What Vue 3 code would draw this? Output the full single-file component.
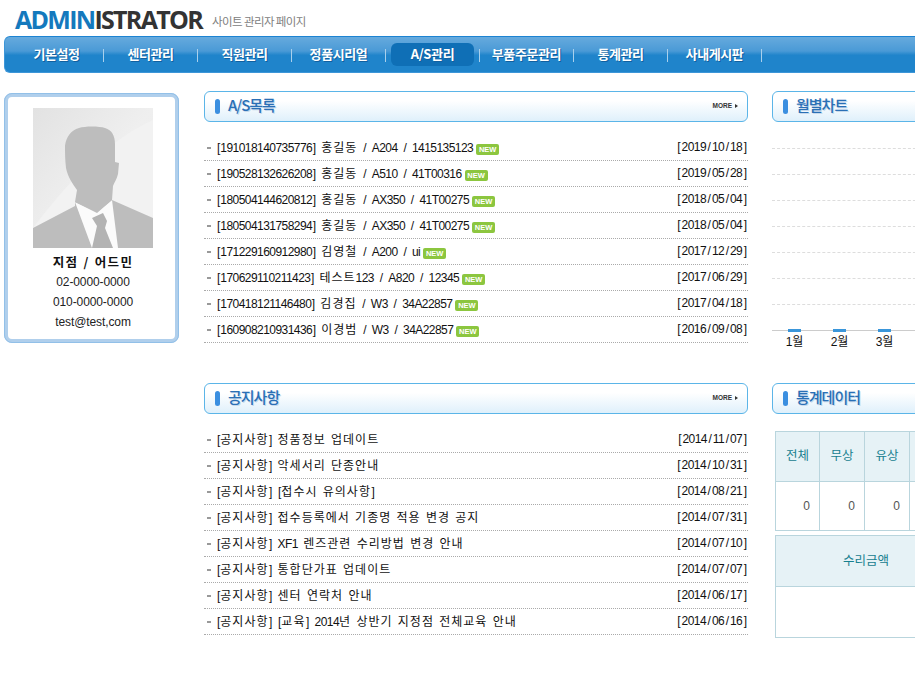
<script setup>
const menus = ['기본설정', '센터관리', '직원관리', '정품시리얼', 'A/S관리', '부품주문관리', '통계관리', '사내게시판']
const asList = [
  ['[191018140735776] 홍길동 / A204 / 1415135123', '[2019/10/18]'],
  ['[190528132626208] 홍길동 / A510 / 41T00316', '[2019/05/28]'],
  ['[180504144620812] 홍길동 / AX350 / 41T00275', '[2018/05/04]'],
  ['[180504131758294] 홍길동 / AX350 / 41T00275', '[2018/05/04]'],
  ['[171229160912980] 김영철 / A200 / ui', '[2017/12/29]'],
  ['[170629110211423] 테스트123 / A820 / 12345', '[2017/06/29]'],
  ['[170418121146480] 김경집 / W3 / 34A22857', '[2017/04/18]'],
  ['[160908210931436] 이경범 / W3 / 34A22857', '[2016/09/08]']
]
const notices = [
  ['[공지사항] 정품정보 업데이트', '[2014/11/07]'],
  ['[공지사항] 악세서리 단종안내', '[2014/10/31]'],
  ['[공지사항] [접수시 유의사항]', '[2014/08/21]'],
  ['[공지사항] 접수등록에서 기종명 적용 변경 공지', '[2014/07/31]'],
  ['[공지사항] XF1 렌즈관련 수리방법 변경 안내', '[2014/07/10]'],
  ['[공지사항] 통합단가표 업데이트', '[2014/07/07]'],
  ['[공지사항] 센터 연락처 안내', '[2014/06/17]'],
  ['[공지사항] [교육] 2014년 상반기 지정점 전체교육 안내', '[2014/06/16]']
]
const months = ['1월', '2월', '3월']
const gridLines = 7
function runs(text) {
  return text.split(/([\uAC00-\uD7A3]+|[\[\]\/])/).filter(Boolean).map(t => ({
    t,
    cls: /[\uAC00-\uD7A3]/.test(t) ? 'ko' : /^[\[\]\/]$/.test(t) ? 'sym' : ''
  }))
}
</script>

<template>
  <div class="page">
    <header class="top">
      <div class="logo"><span class="blue">ADMIN</span>ISTRATOR</div>
      <div class="sub">사이트 관리자 페이지</div>
    </header>
    <nav class="nav">
      <div v-for="(m, i) in menus" :key="m" class="menu">
        <span :class="['label', { active: i === 4 }]">{{ m }}</span>
        <i class="sep"></i>
      </div>
    </nav>
    <div class="content">
      <aside class="profile">
        <svg class="photo" width="120" height="140" viewBox="0 0 120 140">
          <defs>
            <linearGradient id="bg" x1="0" y1="0" x2="1" y2="1">
              <stop offset="0" stop-color="#e2e2e2" />
              <stop offset="0.5" stop-color="#efefef" />
              <stop offset="1" stop-color="#e8e8e8" />
            </linearGradient>
          </defs>
          <rect width="120" height="140" fill="url(#bg)" />
          <path d="M0 120C30 80 70 35 120 12V110L60 140H0Z" fill="#f2f2f2" />
          <path d="M0 120L42 98L42 94L79 92L120 110V140H0Z" fill="#bdbdbd" />
          <path d="M42 94L59 140H85L79 92L64 104Z" fill="#fbfbfb" />
          <path d="M59 110L70 105L74 113L72 120L80 140H59L64 118Z" fill="#b3b3b3" />
          <path d="M42 94L44 82C40 76 35 70 33 60C32 52 32 44 32 38C33 29 38 22 46 20C52 18 66 18 72 20C79 22 82 28 82 36V54L86 55L85 66C84 71 81 75 80 78L79 92L64 105Z" fill="#bdbdbd" />
        </svg>
        <div class="name">지점 / 어드민</div>
        <div class="line">02-0000-0000</div>
        <div class="line">010-0000-0000</div>
        <div class="line">test@test,com</div>
      </aside>

      <main class="main">
        <div class="title">
          <i class="pill"></i><span class="tt">A/S목록</span>
          <span class="more">MORE<b></b></span>
        </div>
        <ul class="list">
          <li v-for="(r, i) in asList" :key="i">
            <i class="dash"></i>
            <span class="text"><span v-for="(p, j) in runs(r[0])" :key="j" :class="p.cls">{{ p.t }}</span></span>
            <span class="badge">NEW</span>
            <span class="date"><span v-for="(p, j) in runs(r[1])" :key="j" :class="p.cls">{{ p.t }}</span></span>
          </li>
        </ul>
        <div class="title second">
          <i class="pill"></i><span class="tt">공지사항</span>
          <span class="more">MORE<b></b></span>
        </div>
        <ul class="list">
          <li v-for="(r, i) in notices" :key="i">
            <i class="dash"></i>
            <span class="text"><span v-for="(p, j) in runs(r[0])" :key="j" :class="p.cls">{{ p.t }}</span></span>
            <span class="date"><span v-for="(p, j) in runs(r[1])" :key="j" :class="p.cls">{{ p.t }}</span></span>
          </li>
        </ul>
      </main>

      <section class="right">
        <div class="title">
          <i class="pill"></i><span class="tt">월별차트</span>
        </div>
        <div class="chart">
          <div v-for="n in gridLines" :key="n" class="grid"></div>
          <div class="axis">
            <div v-for="m in months" :key="m" class="month">
              <i class="bar"></i>
              <span>{{ m }}</span>
            </div>
          </div>
        </div>
        <div class="title">
          <i class="pill"></i><span class="tt">통계데이터</span>
        </div>
        <table class="tb t1">
          <tbody>
            <tr class="h1">
              <th>전체</th><th>무상</th><th>유상</th><th></th><th></th><th></th>
            </tr>
            <tr class="r1">
              <td>0</td><td>0</td><td>0</td><td></td><td></td><td></td>
            </tr>
          </tbody>
        </table>
        <table class="tb t2">
          <tbody>
            <tr class="h2"><th>수리금액</th><th></th></tr>
            <tr class="r2"><td></td><td></td></tr>
          </tbody>
        </table>
      </section>
    </div>
  </div>
</template>

<style>
html, body { margin: 0; overflow: hidden; background: #fff; }
</style>

<style scoped>
.page {
  width: 915px;
  height: 677px;
  overflow: hidden;
  font-family: "Liberation Sans", "Noto Sans CJK KR", sans-serif;
  font-size: 12px;
  color: #111;
}
.top {
  height: 36px;
  box-sizing: border-box;
  padding-left: 15px;
  display: flex;
  align-items: flex-start;
}
.logo {
  font-family: "Open Sans", sans-serif;
  font-weight: 700;
  font-size: 25px;
  line-height: 38px;
  letter-spacing: -1.7px;
  color: #333;
  white-space: nowrap;
}
.blue { color: #1479bd; }
.sub {
  font-family: "Noto Sans CJK KR", sans-serif;
  font-size: 11.5px;
  line-height: 42px;
  margin-left: 10px;
  color: #808080;
  letter-spacing: -0.6px;
}
.nav {
  margin-left: 4px;
  width: 960px;
  height: 37px;
  box-sizing: border-box;
  padding-left: 5px;
  border-top: 1px solid #1c83d2;
  border-bottom: 1px solid #3d96d8;
  border-left: 1px solid #3d96d8;
  border-radius: 6px 0 0 6px;
  background: linear-gradient(#66aadd 0, #4a9ad6 40%, #1f84cb 52%, #1f84cb 100%);
  display: flex;
  align-items: center;
}
.menu {
  width: 94px;
  flex: none;
  height: 100%;
  display: flex;
  align-items: center;
  position: relative;
}
.label {
  margin-left: 5px;
  width: 83px;
  height: 23px;
  line-height: 21px;
  text-align: center;
  font-family: "Noto Sans CJK KR", sans-serif;
  font-size: 13px;
  font-weight: 700;
  letter-spacing: -0.4px;
  color: #fff;
  text-shadow: 1px 1px 0 #11609f;
  border-radius: 6px;
  white-space: nowrap;
}
.label.active { background: #0f6fb6; }
.sep {
  position: absolute;
  right: 0;
  top: 12px;
  width: 1px;
  height: 13px;
  background: #a9d0ec;
}
.content {
  display: flex;
  align-items: flex-start;
  padding: 18px 0 0 4px;
}
.profile {
  width: 175px;
  height: 250px;
  margin-top: 2px;
  flex: none;
  box-sizing: border-box;
  border: 4px solid #b0cfec;
  outline: 1px solid #92c0e8;
  outline-offset: -1px;
  border-radius: 8px;
  padding-top: 11px;
  display: flex;
  flex-direction: column;
  align-items: center;
}
.photo { display: block; margin-left: 3px; flex: none; }
.name {
  margin: 5px 0 1px 3px;
  font-family: "Noto Sans CJK KR", sans-serif;
  font-weight: 700;
  font-size: 12.5px;
  line-height: 18px;
  letter-spacing: 1.3px;
  word-spacing: 1px;
  color: #111;
}
.line {
  font-size: 12px;
  line-height: 20px;
  color: #222;
  margin-left: 3px;
  letter-spacing: -0.1px;
}
.main {
  width: 544px;
  margin-left: 25px;
  flex: none;
}
.title {
  height: 31px;
  box-sizing: border-box;
  border: 1px solid #5bb5e8;
  border-radius: 6px;
  background: linear-gradient(#fff 30%, #dff0fb 100%);
  display: flex;
  align-items: center;
  padding-left: 10px;
}
.title.second { margin-top: 40px; }
.pill {
  width: 5px;
  height: 15px;
  border-radius: 3px;
  background: #3b8fe0;
  flex: none;
}
.tt {
  margin: 0 0 5px 8px;
  font-family: "Noto Sans CJK KR", sans-serif;
  font-size: 15px;
  font-weight: 500;
  letter-spacing: -1px;
  color: #2a6fb5;
  text-shadow: 1px 1px 0 #c5d9ec;
}
.more {
  margin: 0 9px 2px auto;
  font-size: 6.5px;
  font-weight: 700;
  color: #333;
  display: flex;
  align-items: center;
}
.more b {
  margin-left: 3px;
  border-left: 3px solid #333;
  border-top: 2px solid transparent;
  border-bottom: 2px solid transparent;
}
.list {
  list-style: none;
  margin: 13px 0 0;
  padding: 0;
}
.list li {
  height: 26px;
  box-sizing: border-box;
  border-bottom: 1px dotted #aaa;
  display: flex;
  align-items: center;
  padding: 0 0 2px 3px;
  white-space: pre;
}
.dash {
  width: 4px;
  height: 2px;
  background: #999;
  margin: 2px 5.5px 0 0;
}
.text, .date {
  letter-spacing: -0.55px;
  word-spacing: 2.5px;
}
.ko {
  font-family: "Noto Sans CJK KR", sans-serif;
  font-size: 12px;
  letter-spacing: 1px;
}
.text .sym { margin: 0 0.5px; }
.date .sym { margin: 0 1.5px; }
.badge {
  margin: 6px 0 0 3px;
  width: 23px;
  height: 11px;
  line-height: 11px;
  border-radius: 2px;
  background: #8cc63f;
  color: #fff;
  font-size: 7.5px;
  font-weight: 700;
  text-align: center;
}
.date { margin-left: auto; }
.right {
  width: 300px;
  margin-left: 24px;
  flex: none;
}
.chart {
  height: 261px;
  box-sizing: border-box;
  padding-top: 26px;
}
.grid {
  height: 26px;
  box-sizing: border-box;
  border-top: 1px dashed #ddd;
}
.axis {
  border-top: 1px solid #ccc;
  display: flex;
}
.month {
  width: 45px;
  flex: none;
  display: flex;
  flex-direction: column;
  align-items: center;
}
.month span { margin-top: 1px; line-height: 18px; }
.bar {
  width: 13px;
  height: 3px;
  margin-top: -2px;
  background: #3a96da;
}
.tb {
  border-collapse: collapse;
  table-layout: fixed;
  margin-left: 3px;
}
.tb th, .tb td {
  border: 1px solid #b9d5dd;
  padding: 0;
}
.tb th {
  background: #e6f2f6;
  color: #17808f;
  font-family: "Noto Sans CJK KR", sans-serif;
  font-size: 12.5px;
  font-weight: 400;
  padding-bottom: 4px;
}
.tb td {
  text-align: right;
  padding-right: 9px;
  color: #555;
}
.t1 { width: 263px; margin-top: 17px; }
.t1 th, .t1 td { width: 44px; }
.t1 th:first-child, .t1 td:first-child { width: 43px; }
.t2 { width: 360px; margin-top: 4px; }
.t2 th, .t2 td { width: 180px; }
.h1 { height: 50px; }
.r1 { height: 49px; }
.h2 { height: 51px; }
.r2 { height: 51px; }
</style>
